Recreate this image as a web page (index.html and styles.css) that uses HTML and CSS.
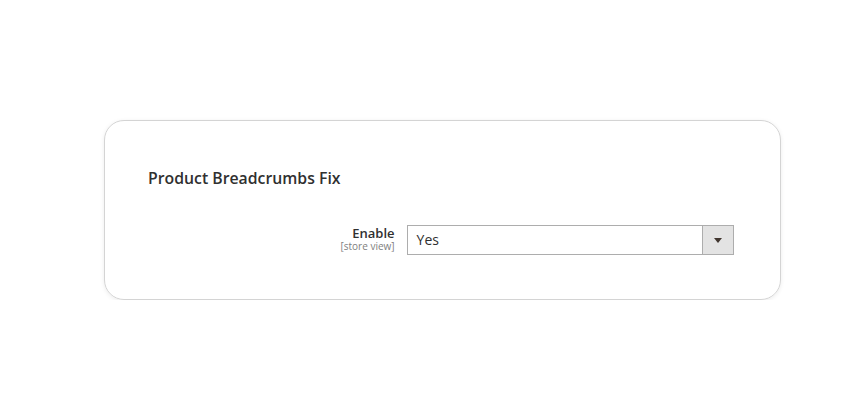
FILE: index.html
```html
<!DOCTYPE html>
<html>
<head lang="en">
    <meta charset="UTF-8">
    <title>Product Breadcrumbs Fix</title>
    <link rel="stylesheet" href="styles.css">
</head>
<body>
<div class="card">
    <h2 class="card-title">Product Breadcrumbs Fix</h2>
    <div class="field">
        <div class="field-label">
            <span class="label-text">Enable</span>
            <span class="label-scope">[store view]</span>
        </div>
        <div class="select">
            <span class="select-value">Yes</span>
            <span class="select-arrow"></span>
        </div>
    </div>
</div>
</body>
</html>
```

FILE: styles.css
```css
*{
    margin:0;
    padding:0;
    box-sizing:border-box;
}
body{
    background:#fff;
    font-family:"Open Sans", "Liberation Sans", sans-serif;
    color:#303030;
    padding:120px 0 0 104px;
}
.card{
    width:677px;
    height:180px;
    border:1px solid #d4d4d4;
    border-radius:20px;
    box-shadow:0 1px 4px rgba(0,0,0,0.08);
    padding:46px 46px 0 43px;
}
.card-title{
    font-size:15.8px;
    font-weight:600;
    line-height:22px;
    color:#303030;
}
.field{
    display:flex;
    margin-top:36px;
    gap:12px;
}
.field-label{
    width:247px;
    text-align:right;
    display:flex;
    flex-direction:column;
}
.label-text{
    font-size:13px;
    font-weight:600;
    line-height:16px;
    color:#303030;
}
.label-scope{
    font-size:10px;
    line-height:11px;
    color:#808080;
}
.select{
    width:328px;
    height:30px;
    border:1px solid #adadad;
    display:flex;
    align-items:center;
}
.select-value{
    flex:1;
    font-size:14px;
    line-height:18px;
    padding:0 0 1px 9px;
    color:#303030;
}
.select-arrow{
    width:31px;
    height:28px;
    background:#e3e3e3;
    border-left:1px solid #adadad;
    display:flex;
    align-items:center;
    justify-content:center;
}
.select-arrow:after{
    content:"";
    border-left:4px solid transparent;
    border-right:4px solid transparent;
    border-top:5px solid #41362f;
}
```
